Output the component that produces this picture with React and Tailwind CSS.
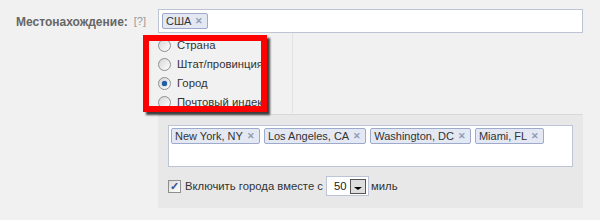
import React from 'react';

const font = { fontFamily: '"Liberation Sans", Arial, sans-serif' };

const Tag = ({ label }) => (
  <span className="inline-flex h-[16px] shrink-0 items-center gap-[4px] whitespace-nowrap rounded-[2px] border border-[#9eaacb] bg-[#e3e8f3] pl-[3px] pr-[4px] text-[11px] leading-none text-[#333]">
    {label}
    <span className="text-[9px] font-bold text-[#8f9bb5]">✕</span>
  </span>
);

const Radio = ({ checked }) => (
  <span className="flex h-[13px] w-[13px] shrink-0 items-center justify-center rounded-full border border-[#8e8f8f] bg-gradient-to-br from-[#d6d6d6] to-[#ffffff]">
    {checked && <span className="h-[5px] w-[5px] rounded-full bg-[#1e5fa8] shadow-[0_0_1px_#0b3d7a]" />}
  </span>
);

const options = [
  { label: 'Страна' },
  { label: 'Штат/провинция' },
  { label: 'Город', checked: true },
  { label: 'Почтовый индекс' },
];

export default function App() {
  return (
    <div className="relative h-[220px] w-[600px] overflow-hidden bg-[#f1f1f1]" style={font}>
      {/* location row */}
      <div className="flex pt-[9px]">
        <div className="flex w-[158px] items-center gap-[6px] pl-[16px] pt-[1px]">
          <span className="whitespace-nowrap text-[12px] font-bold text-[#666]">Местонахождение:</span>
          <span className="text-[11px] text-[#999]">[?]</span>
        </div>
        <div className="flex h-[24px] w-[425px] items-center border border-[#bcc4d6] bg-white pl-[3px]">
          <Tag label="США" />
        </div>
      </div>

      {/* city panel */}
      <div className="ml-[158px] mt-[81px] h-[94px] w-[425px] border-t border-[#d8d8d8] bg-[#e8e8e8] pl-[10px] pt-[10px]">
        <div className="h-[42px] w-[405px] border border-[#bcc4d6] bg-white p-[2px]">
          <div className="flex gap-[4px]">
            <Tag label="New York, NY" />
            <Tag label="Los Angeles, CA" />
            <Tag label="Washington, DC" />
            <Tag label="Miami, FL" />
          </div>
        </div>
        <div className="mt-[9px] flex items-center text-[11.3px] text-[#333]">
          <span className="flex h-[13px] w-[13px] shrink-0 items-center justify-center border border-[#8e8f8f] bg-gradient-to-br from-[#dcdcdc] to-white text-[11px] font-bold leading-none text-[#3a4f96]">
            ✓
          </span>
          <span className="ml-[4px] whitespace-nowrap">Включить города вместе с</span>
          <span className="ml-[3px] flex h-[20px] w-[43px] shrink-0 items-center border border-[#bcc4d6] bg-white pl-[7px]">
            <span className="flex-1 text-[#222]">50</span>
            <span className="mr-[2px] flex h-[15px] w-[16px] items-end justify-center border border-[#555] bg-[#dedede] pb-[3px]">
              <span className="h-0 w-0 border-x-[4px] border-t-[3px] border-x-transparent border-t-black" />
            </span>
          </span>
          <span className="ml-[2px]">миль</span>
        </div>
      </div>

      {/* dropdown list (overlay) */}
      <div className="absolute left-[145px] top-[33px] h-[80px] w-[148px] border-r border-[#e2e2e2] bg-[#f1f1f1]" />

      {/* highlighted options (overlay) */}
      <div className="absolute left-[143px] top-[35px] h-[77px] w-[124px] overflow-hidden border-[6px] border-[#ff0000] bg-[#f1f1f1] shadow-[3px_3px_2px_rgba(0,0,0,0.75)]">
        <div className="-mt-[5px] flex flex-col pl-[9px]">
          {options.map((o) => (
            <div key={o.label} className="flex h-[19px] items-center gap-[6px] whitespace-nowrap text-[11.3px] text-[#333]">
              <Radio checked={o.checked} />
              <span>{o.label}</span>
            </div>
          ))}
        </div>
      </div>
    </div>
  );
}
